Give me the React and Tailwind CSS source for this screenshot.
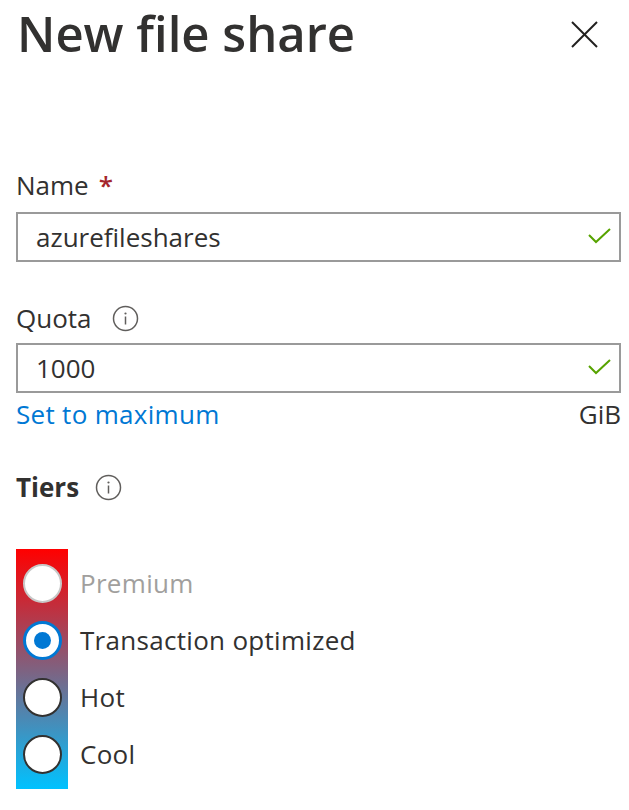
import React from "react";

function InfoIcon() {
  return (
    <svg width="27" height="27" viewBox="0 0 27 27" className="shrink-0">
      <circle cx="13.5" cy="13.5" r="12" fill="none" stroke="#605e5c" strokeWidth="1.5" />
      <circle cx="13.5" cy="8.5" r="1.1" fill="#605e5c" />
      <line x1="13.5" y1="11.5" x2="13.5" y2="19.5" stroke="#605e5c" strokeWidth="1.5" />
    </svg>
  );
}

function Check() {
  return (
    <svg width="24" height="18" viewBox="0 0 24 18" className="shrink-0">
      <polyline points="1,7 8,14 22,1" fill="none" stroke="#57a300" strokeWidth="2" />
    </svg>
  );
}

function TextBox({ value }) {
  return (
    <div className="flex items-center h-[50px] border-2 border-[#9a9a9a] pl-[18px] pr-[7px]">
      <span className="flex-1 text-[26px] text-[#323130]">{value}</span>
      <Check />
    </div>
  );
}

function Radio({ state }) {
  if (state === "disabled") {
    return (
      <div className="w-[39px] h-[39px] rounded-full bg-white border-2 border-[#c8c8c8]" />
    );
  }
  if (state === "checked") {
    return (
      <div className="w-[39px] h-[39px] rounded-full bg-white border-[3px] border-[#0078d4] flex items-center justify-center">
        <div className="w-[17px] h-[17px] rounded-full bg-[#0078d4]" />
      </div>
    );
  }
  return <div className="w-[39px] h-[39px] rounded-full bg-white border-2 border-[#323130]" />;
}

export default function App() {
  const tiers = [
    { label: "Premium", state: "disabled" },
    { label: "Transaction optimized", state: "checked" },
    { label: "Hot", state: "off" },
    { label: "Cool", state: "off" },
  ];

  return (
    <div
      className="w-[629px] h-[810px] bg-white px-4 text-[#323130] overflow-hidden"
      style={{ fontFamily: '"Open Sans", "Noto Sans", sans-serif' }}
    >
      <div className="flex items-start justify-between h-[70px]">
        <h1 className="text-[49px] font-semibold leading-[64px] mt-[1px] pl-[1px]">New file share</h1>
        <button className="mt-[21px] mr-[15px]">
          <svg width="27" height="27" viewBox="0 0 27 27">
            <line x1="1" y1="1" x2="26" y2="26" stroke="#201f1e" strokeWidth="2" />
            <line x1="26" y1="1" x2="1" y2="26" stroke="#201f1e" strokeWidth="2" />
          </svg>
        </button>
      </div>

      <div className="mt-[97px] flex items-center h-[36px] text-[26px]">
        <span>Name</span>
        <span className="ml-[10px] text-[#a4262c] font-semibold">*</span>
      </div>
      <div className="mt-[9px] mr-[-8px]">
        <TextBox value="azurefileshares" />
      </div>

      <div className="mt-[38px] flex items-center h-[36px] text-[26px]">
        <span>Quota</span>
        <span className="ml-[20px]">
          <InfoIcon />
        </span>
      </div>
      <div className="mt-[7px] mr-[-8px]">
        <TextBox value="1000" />
      </div>
      <div className="mr-[-8px] flex items-center justify-between h-[42px] text-[26px]">
        <span className="text-[#0078d4] tracking-[0.3px]">Set to maximum</span>
        <span>GiB</span>
      </div>

      <div className="mt-[34px] flex items-center h-[36px] text-[26px] font-bold">
        <span>Tiers</span>
        <span className="ml-[16px]">
          <InfoIcon />
        </span>
      </div>

      <div className="mt-[44px] flex">
        <div className="w-[52px] pt-[6px] pb-[6px] bg-linear-to-b/srgb from-[#ff0000] to-[#00c2ff]">
          {tiers.map((t) => (
            <div key={t.label} className="h-[57px] flex items-center justify-center">
              <Radio state={t.state} />
            </div>
          ))}
        </div>
        <div className="pt-[6px] pb-[6px] pl-[12px]">
          {tiers.map((t) => (
            <div
              key={t.label}
              className={
                "h-[57px] flex items-center text-[26px] tracking-[0.3px] " +
                (t.state === "disabled" ? "text-[#a19f9d]" : "text-[#323130]")
              }
            >
              {t.label}
            </div>
          ))}
        </div>
      </div>
    </div>
  );
}
